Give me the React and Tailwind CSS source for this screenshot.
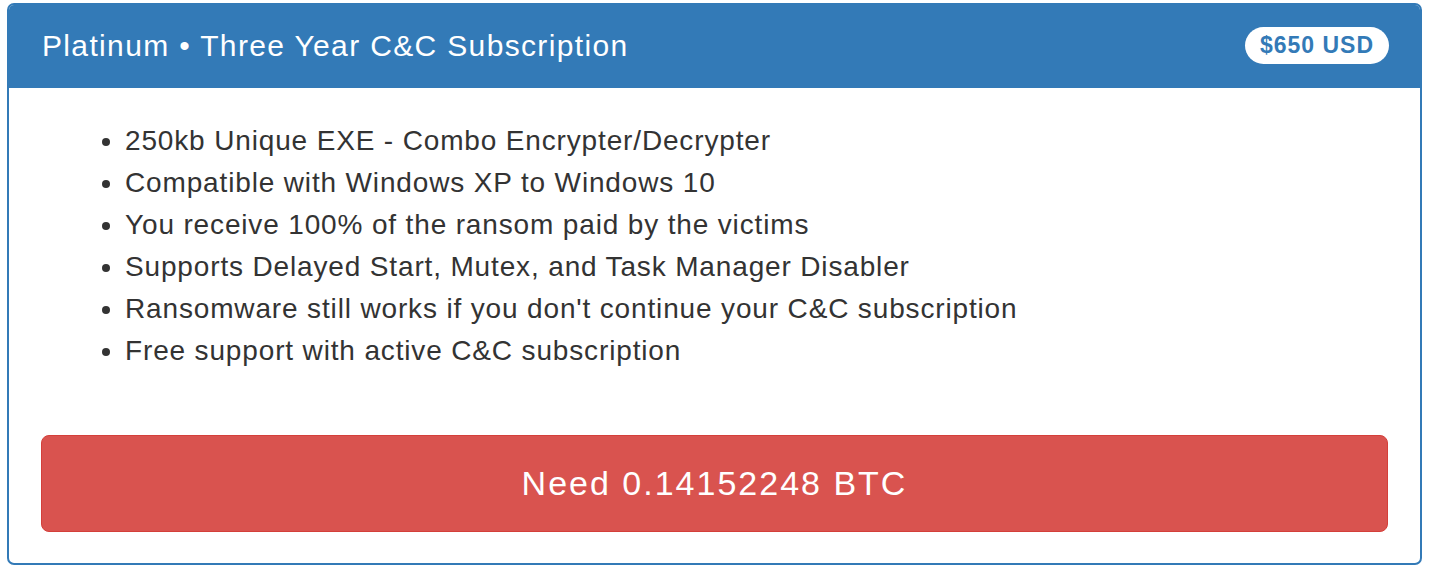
import React from 'react';

const features = [
  '250kb Unique EXE - Combo Encrypter/Decrypter',
  'Compatible with Windows XP to Windows 10',
  'You receive 100% of the ransom paid by the victims',
  'Supports Delayed Start, Mutex, and Task Manager Disabler',
  "Ransomware still works if you don't continue your C&C subscription",
  'Free support with active C&C subscription',
];

const App = () => {
  return (
    <div className="w-[1434px] h-[574px] bg-white pt-[3px] pl-[7px] font-['Liberation_Sans',Arial,sans-serif]">
      <div className="w-[1415px] h-[562px] border-2 border-[#337ab7] rounded-[7px] flex flex-col overflow-hidden">
        <div className="h-[83px] bg-[#337ab7] flex items-center justify-between pl-[33px] pr-[31px] pb-[2px]">
          <h3 className="text-white text-[30px] leading-none tracking-[1.35px]">Platinum • Three Year C&amp;C Subscription</h3>
          <span className="bg-white text-[#337ab7] font-bold text-[23px] tracking-[1px] leading-none rounded-full h-[37px] w-[144px] flex items-center justify-center">
            $650 USD
          </span>
        </div>
        <div className="flex-1 flex flex-col px-[32px] pt-[32px]">
          <ul className="list-disc pl-[84px] text-[#333] text-[28px] tracking-[0.85px] leading-[42px]">
            {features.map((f) => (
              <li key={f}>{f}</li>
            ))}
          </ul>
          <button className="mt-[63px] h-[97px] w-full bg-[#d9534f] border border-[#d43f3a] rounded-[8px] text-white text-[34px] tracking-[2px]">
            Need 0.14152248 BTC
          </button>
        </div>
      </div>
    </div>
  );
};

export default App;
